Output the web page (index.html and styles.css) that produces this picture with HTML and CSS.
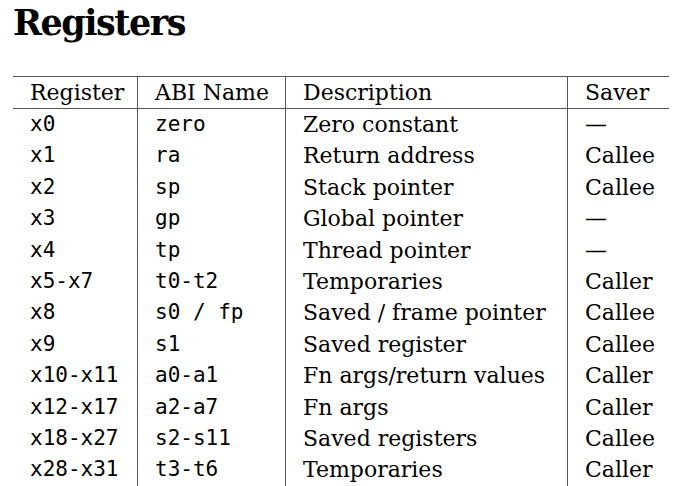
FILE: index.html
```html
<!DOCTYPE html>
<html>
<head>
<meta charset="utf-8">
<link rel="stylesheet" href="styles.css">
</head>
<body>
<h1 class="title">Registers</h1>
<table class="regs">
<thead>
<tr><th class="c1">Register</th><th class="c2">ABI Name</th><th class="c3">Description</th><th class="c4">Saver</th></tr>
</thead>
<tbody>
<tr><td class="mono">x0</td><td class="mono">zero</td><td>Zero constant</td><td>—</td></tr>
<tr><td class="mono">x1</td><td class="mono">ra</td><td>Return address</td><td>Callee</td></tr>
<tr><td class="mono">x2</td><td class="mono">sp</td><td>Stack pointer</td><td>Callee</td></tr>
<tr><td class="mono">x3</td><td class="mono">gp</td><td>Global pointer</td><td>—</td></tr>
<tr><td class="mono">x4</td><td class="mono">tp</td><td>Thread pointer</td><td>—</td></tr>
<tr><td class="mono">x5-x7</td><td class="mono">t0-t2</td><td>Temporaries</td><td>Caller</td></tr>
<tr><td class="mono">x8</td><td class="mono">s0 / fp</td><td>Saved / frame pointer</td><td>Callee</td></tr>
<tr><td class="mono">x9</td><td class="mono">s1</td><td>Saved register</td><td>Callee</td></tr>
<tr><td class="mono">x10-x11</td><td class="mono">a0-a1</td><td>Fn args/return values</td><td>Caller</td></tr>
<tr><td class="mono">x12-x17</td><td class="mono">a2-a7</td><td>Fn args</td><td>Caller</td></tr>
<tr><td class="mono">x18-x27</td><td class="mono">s2-s11</td><td>Saved registers</td><td>Callee</td></tr>
<tr><td class="mono">x28-x31</td><td class="mono">t3-t6</td><td>Temporaries</td><td>Caller</td></tr>
</tbody>
</table>
</body>
</html>
```
FILE: styles.css
```css
html, body {
  margin: 0;
  padding: 0;
  background: #fff;
}
body {
  padding: 0 0 0 13px;
  font-family: "DejaVu Serif", "Liberation Serif", serif;
  color: #000;
}
.title {
  margin: 0;
  font-size: 35px;
  line-height: 46px;
  font-weight: bold;
  letter-spacing: -1.5px;
}
.regs {
  margin-top: 30px;
  border-collapse: collapse;
  width: 656px;
  font-size: 22px;
}
.regs th, .regs td {
  text-align: left;
  font-weight: normal;
  padding: 0 0 0 17px;
  line-height: 31.4px;
  white-space: nowrap;
  border-left: 1.5px solid #555;
}
.regs th:first-child, .regs td:first-child {
  border-left: none;
}
.regs thead th {
  line-height: 31px;
  border-top: 1.5px solid #555;
  border-bottom: 1.5px solid #555;
}
.c1 { width: 107px; }
.c2 { width: 130px; }
.c3 { width: 264px; }
.mono {
  font-family: "DejaVu Sans Mono", "Liberation Mono", monospace;
  font-size: 21px;
}
```
